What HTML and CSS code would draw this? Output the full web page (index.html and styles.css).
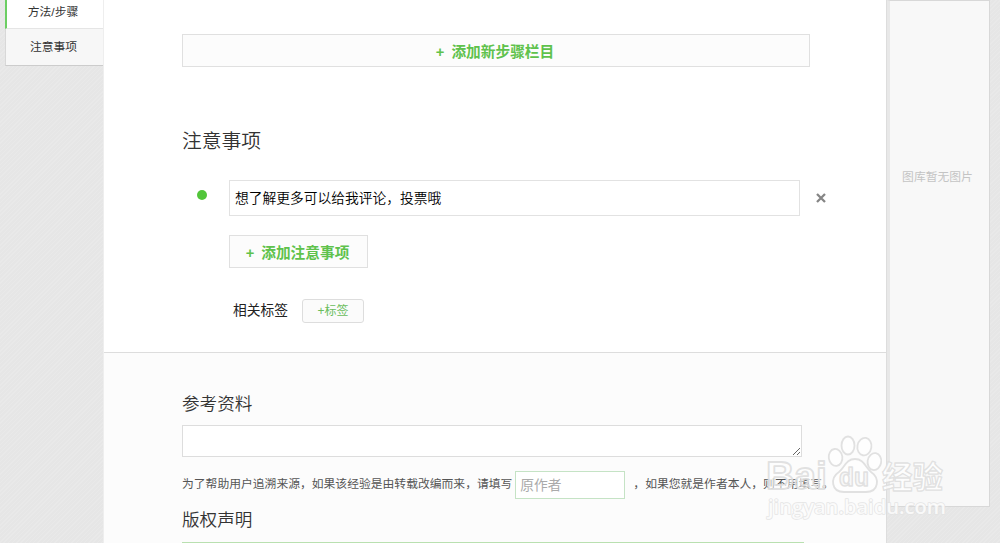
FILE: index.html
```html
<!DOCTYPE html>
<html lang="zh-CN">
<head>
    <meta charset="UTF-8">
    <title>百度经验</title>
    <link rel="stylesheet" href="styles.css">
</head>
<body>
    <div class="page">
        <ul class="side-nav">
            <li class="current">方法/步骤</li>
            <li>注意事项</li>
        </ul>

        <div class="editor">
            <div class="steps">
                <button class="add-btn add-step"><span class="plus">+</span>添加新步骤栏目</button>

                <h2>注意事项</h2>
                <div class="notice">
                    <span class="dot"></span>
                    <input class="notice-input" type="text" value="想了解更多可以给我评论，投票哦">
                    <svg class="close" width="10" height="10" viewBox="0 0 10 10">
                        <path d="M1 1L9 9M9 1L1 9" stroke="#858585" stroke-width="2.3" />
                    </svg>
                </div>
                <button class="add-btn add-notice"><span class="plus">+</span>添加注意事项</button>

                <div class="tags">
                    <span class="tags-label">相关标签</span>
                    <button class="tag-btn">+标签</button>
                </div>
            </div>

            <div class="extra">
                <h3>参考资料</h3>
                <textarea class="reference"></textarea>
                <div class="origin">
                    <span class="hint">为了帮助用户追溯来源，如果该经验是由转载改编而来，请填写</span>
                    <input class="author" type="text" placeholder="原作者">
                    <span class="hint">，如果您就是作者本人，则不用填写。</span>
                </div>
                <h3>版权声明</h3>
                <div class="copyright"></div>
            </div>
        </div>

        <div class="gallery">图库暂无图片</div>
    </div>

    <svg class="watermark" width="190" height="100" viewBox="0 0 190 100">
        <g class="mark">
            <ellipse cx="75.500" cy="27.500" rx="6.800" ry="8.500" transform="rotate(-8 75 27)" />
            <ellipse cx="88" cy="15.500" rx="6.500" ry="9" />
            <ellipse cx="104.500" cy="16.500" rx="7" ry="8.800" transform="rotate(10 104 16)" />
            <ellipse cx="114.500" cy="31.500" rx="6.800" ry="8.500" transform="rotate(10 114 31)" />
            <path d="M95 29C104 29 105 37 111 42C120 48 119 62 106 62H84C71 62 70 48 79 42C85 37 86 29 95 29Z" />
            <text class="brand" x="6" y="59" textLength="61" lengthAdjust="spacingAndGlyphs">Bai</text>
            <text class="du" x="79" y="56" textLength="30" lengthAdjust="spacingAndGlyphs">du</text>
            <text class="cn" x="122" y="58" textLength="61" lengthAdjust="spacingAndGlyphs">经验</text>
            <text class="url" x="8" y="84" textLength="178" lengthAdjust="spacingAndGlyphs">jingyan.baidu.com</text>
        </g>
    </svg>
</body>
</html>
```

FILE: styles.css
```css
* {
    box-sizing: border-box;
}
body {
    margin: 0;
    height: 543px;
    overflow: hidden;
    font-family: "Liberation Sans", "Noto Sans CJK SC", sans-serif;
    font-size: 11.8px;
    color: #333;
    background: repeating-linear-gradient(135deg, #e6e6e6 0, #e6e6e6 2px, #e9e9e9 2px, #e9e9e9 3px);
}
input, button, textarea {
    font-family: inherit;
    outline: none;
}
h2, h3 {
    margin: 0;
    font-weight: 350;
    color: #333;
}
h2 {
    font-size: 19.8px;
    line-height: 30px;
    margin-top: 59px;
}
h3 {
    font-size: 17.6px;
    line-height: 26px;
}

.page {
    display: flex;
    align-items: flex-start;
    height: 543px;
}

.side-nav {
    width: 98px;
    margin: 0 0 0 5px;
    padding: 0;
    list-style: none;
    text-align: center;
    border-left: 1px solid #d8d8d8;
    border-bottom: 1px solid #ccc;
}
.side-nav li {
    height: 36px;
    line-height: 36px;
    padding-right: 2px;
    background: #f7f7f7;
}
.side-nav .current {
    height: 29px;
    line-height: 25px;
    margin-left: -1px;
    padding-right: 4px;
    background: #fff;
    border-left: 2px solid #6cce63;
    border-bottom: 1px solid #e5e5e5;
}

.editor {
    width: 784px;
    height: 543px;
    background: #fff;
    border-left: 1px solid #eee;
    border-right: 1px solid #ddd;
}
.steps {
    height: 353px;
    padding: 34px 56px 0 78px;
    border-bottom: 1px solid #ddd;
}
.add-btn {
    display: block;
    height: 33px;
    padding: 0 2px 1px 0;
    font-size: 14.7px;
    font-weight: bold;
    color: #5fc24c;
    background: #fcfcfc;
    border: 1px solid #e0e0e0;
}
.plus {
    margin-right: 7px;
}
.add-step {
    width: 628px;
}
.notice {
    display: flex;
    align-items: center;
    margin-top: 24px;
    padding-left: 15px;
}
.dot {
    width: 10px;
    height: 10px;
    margin: 0 22px 6px 0;
    border-radius: 50%;
    background: #52c53a;
}
.notice-input {
    width: 571px;
    height: 36px;
    padding: 0 5px 2px;
    font-size: 13.75px;
    font-weight: 350;
    color: #000;
    border: 1px solid #e2e2e2;
}
.close {
    margin-left: 16px;
}
.add-notice {
    width: 139px;
    margin: 19px 0 0 47px;
}
.tags {
    display: flex;
    align-items: center;
    margin: 31px 0 0 51px;
    font-size: 13.75px;
    color: #222;
}
.tags-label {
    padding-bottom: 4px;
}
.tag-btn {
    width: 62px;
    height: 24px;
    margin-left: 14px;
    padding: 0 0 3px;
    font-size: 12px;
    color: #69bd5c;
    background: #fbfbfb;
    border: 1px solid #ddd;
    border-radius: 3px;
}

.extra {
    height: 190px;
    padding: 38px 0 0 78px;
    background: #fcfcfc;
}
.reference {
    display: block;
    width: 620px;
    height: 32px;
    margin-top: 8px;
    background: #fff;
    border: 1px solid #ddd;
}
.origin {
    display: flex;
    align-items: center;
    margin: 14px 0 8px;
    white-space: nowrap;
    color: #555;
}
.hint {
    padding-bottom: 6px;
}
.author {
    width: 110px;
    height: 28px;
    margin: 0 8px 0 3px;
    padding: 0 4px;
    font-size: 13.75px;
    border: 1px solid #c5e3c5;
}
.author::placeholder {
    color: #aaa;
}
.copyright {
    width: 622px;
    height: 20px;
    margin-top: 9px;
    background: #fff;
    border: 1px solid #b9e0b0;
}

.gallery {
    width: 103px;
    height: 507px;
    padding: 166px 4px 0 0;
    text-align: center;
    color: #c4c4c4;
    background: #f8f8f8;
    border: 1px solid #d8d8d8;
    border-left: 3px solid #e8e8e8;
}

.watermark {
    position: absolute;
    left: 760px;
    top: 430px;
}
.mark {
    fill: #fff;
    fill-opacity: 0.5;
    stroke: #dedede;
    stroke-opacity: 0.9;
    stroke-width: 1.8px;
    stroke-linejoin: round;
    font-family: "Liberation Sans", "Noto Sans CJK SC", sans-serif;
    font-weight: bold;
}
.brand {
    font-size: 39px;
}
.du {
    font-size: 25px;
    fill: #f0f0f0;
    stroke-width: 1.5px;
}
.cn {
    font-size: 31px;
    fill-opacity: 0.8;
    stroke-width: 1.3px;
}
.url {
    font-family: "Open Sans", sans-serif;
    font-size: 20px;
    font-weight: 600;
    fill-opacity: 0.8;
    stroke: #e2e2e2;
    stroke-width: 1.5px;
    paint-order: stroke;
}
```
